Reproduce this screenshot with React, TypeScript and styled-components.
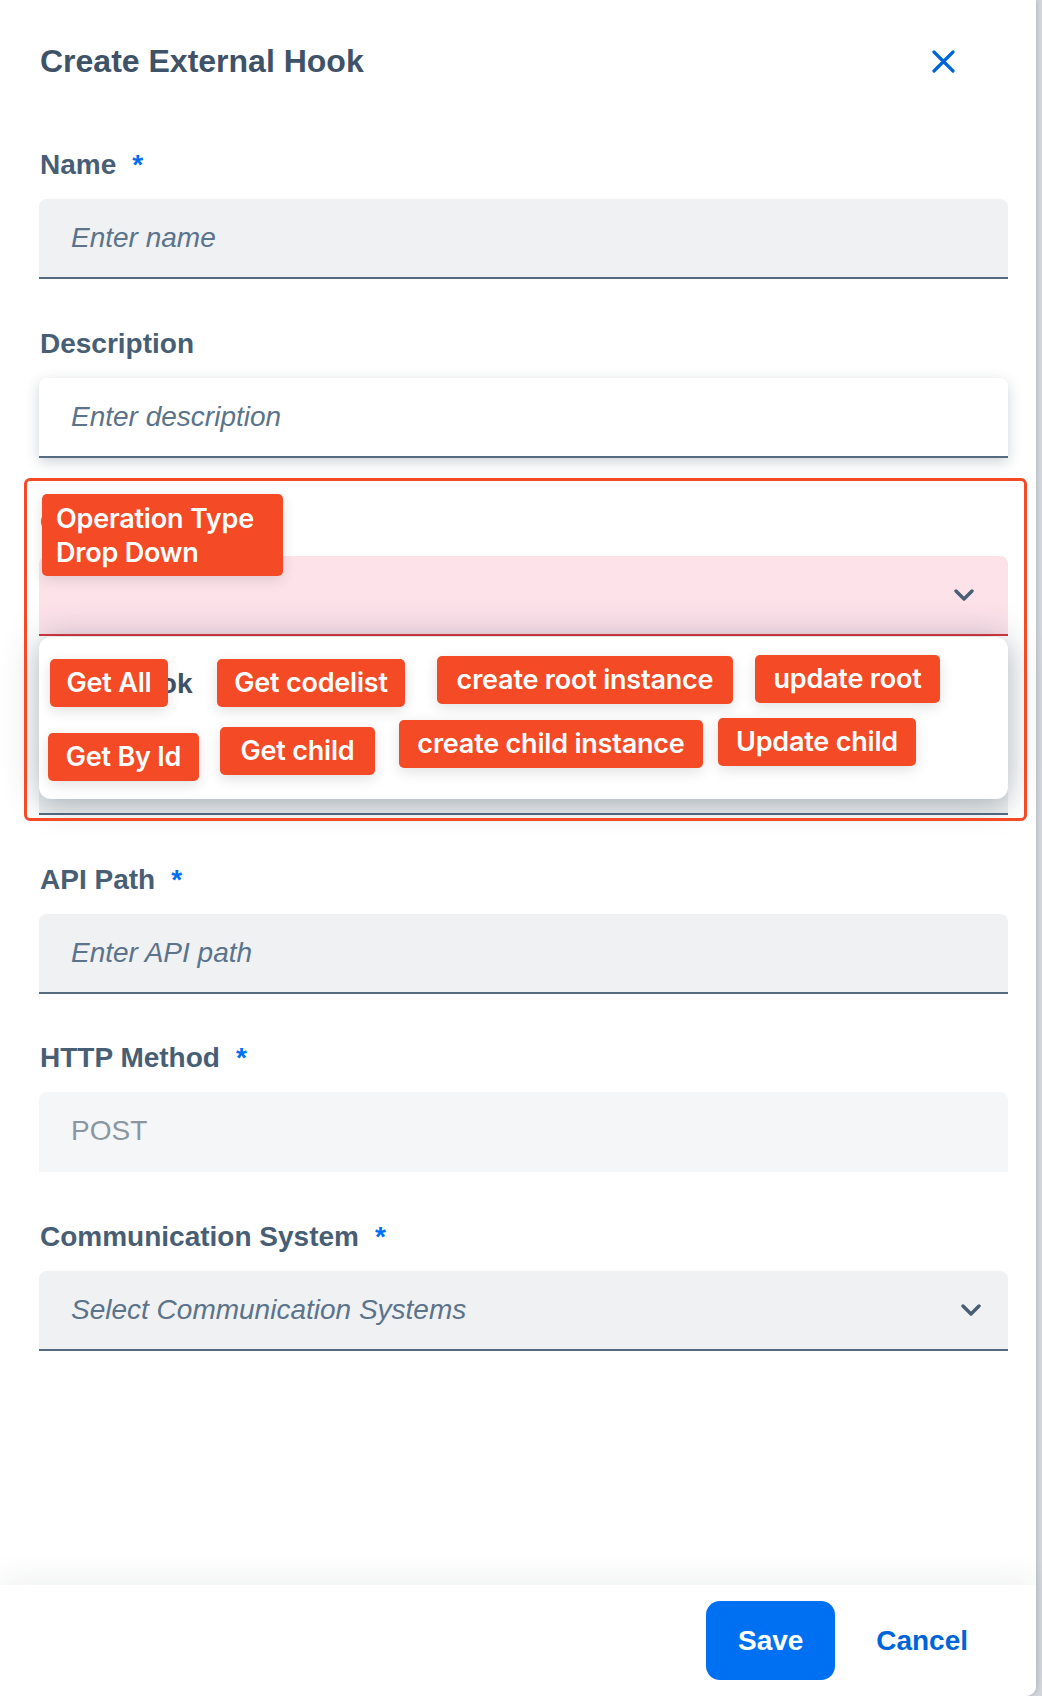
import React from "react";
import styled, { createGlobalStyle, css } from "styled-components";

const GlobalStyle = createGlobalStyle`
  html, body {
    margin: 0;
    padding: 0;
    background: #d3d7dc;
  }
  body {
    font-family: "Liberation Sans", Arial, sans-serif;
  }
  #root {
    min-height: 1696px;
  }
`;

const Panel = styled.div`
  position: relative;
  width: 1036px;
  min-height: 1696px;
  background: #ffffff;
  display: flex;
  flex-direction: column;
  border-radius: 0 0 10px 0;
  box-shadow: 1px 0 4px rgba(34, 54, 73, 0.18);
`;

const Header = styled.header`
  display: flex;
  align-items: center;
  justify-content: space-between;
  padding: 42px 81px 0 40px;
`;

const Title = styled.h1`
  margin: 0;
  font-size: 32px;
  line-height: 38px;
  font-weight: 700;
  color: #3e5268;
`;

const CloseButton = styled.button`
  width: 23px;
  height: 23px;
  padding: 0;
  border: none;
  background: none;
  display: flex;
  align-items: center;
  justify-content: center;
  cursor: pointer;
`;

const Form = styled.form`
  flex: 1;
  display: flex;
  flex-direction: column;
  gap: 47.7px;
  margin-top: 68px;
  padding: 0 28px 0 39px;
`;

const Field = styled.div`
  position: relative;
  display: flex;
  flex-direction: column;
  gap: 17px;
`;

const Label = styled.label`
  font-size: 28px;
  line-height: 34px;
  font-weight: 700;
  color: #475e75;
  padding-left: 1px;
`;

const Required = styled.span`
  color: #0070f2;
  margin-left: 16px;
`;

type BoxVariant = "default" | "focused" | "readonly" | "error";

const boxVariants: Record<BoxVariant, ReturnType<typeof css>> = {
  default: css`
    background: #eff1f2;
    border-bottom: 2px solid #556b82;
  `,
  focused: css`
    background: #ffffff;
    border-bottom: 2px solid #556b82;
    box-shadow: 0 4px 14px rgba(34, 54, 73, 0.22);
  `,
  readonly: css`
    background: #f5f6f7;
    border-bottom: 2px solid #f5f6f7;
  `,
  error: css`
    background: #fde2ea;
    border-bottom: 2px solid #d9363e;
  `,
};

const TextInput = styled.input<{ $variant: BoxVariant }>`
  box-sizing: border-box;
  width: 100%;
  height: 80px;
  padding: 0 30px 0 32px;
  border: none;
  border-radius: 8px 8px 0 0;
  outline: none;
  font-family: "Liberation Sans", Arial, sans-serif;
  font-size: 28px;
  color: ${(p) => (p.$variant === "readonly" ? "#8a96a1" : "#1d2d3e")};
  ${(p) => boxVariants[p.$variant]}

  &::placeholder {
    color: #5b738b;
    font-style: italic;
  }
`;

const SelectBox = styled.div<{ $variant: BoxVariant; $iconInset: number }>`
  box-sizing: border-box;
  display: flex;
  align-items: center;
  justify-content: space-between;
  height: 80px;
  padding: 0 ${(p) => p.$iconInset}px 0 32px;
  border-radius: 8px 8px 0 0;
  font-size: 28px;
  ${(p) => boxVariants[p.$variant]}
`;

const Placeholder = styled.span`
  color: #5b738b;
  font-style: italic;
`;

const Popover = styled.div`
  position: absolute;
  top: calc(100% + 1px);
  left: 0;
  right: 0;
  height: 162px;
  box-sizing: border-box;
  padding: 30px 28px;
  background: #ffffff;
  border-radius: 12px;
  box-shadow: 0 0 36px rgba(34, 54, 73, 0.28), 0 10px 20px rgba(34, 54, 73, 0.12);
  z-index: 2;
`;

const PopoverOption = styled.div`
  font-size: 28px;
  line-height: 34px;
  font-weight: 700;
  color: #3f5166;
`;

const Footer = styled.footer`
  height: 111px;
  display: flex;
  align-items: center;
  justify-content: flex-end;
  gap: 41px;
  padding-right: 68px;
  background: #ffffff;
  border-radius: 0 0 10px 0;
  box-shadow: 0 -10px 28px rgba(34, 54, 73, 0.06);
`;

const SaveButton = styled.button`
  width: 129px;
  height: 79px;
  border: none;
  border-radius: 14px;
  background: #0070f2;
  color: #ffffff;
  font-family: "Liberation Sans", Arial, sans-serif;
  font-size: 28px;
  font-weight: 700;
  cursor: pointer;
`;

const CancelButton = styled.button`
  border: none;
  background: none;
  padding: 0;
  color: #0064d9;
  font-family: "Liberation Sans", Arial, sans-serif;
  font-size: 28px;
  font-weight: 700;
  cursor: pointer;
`;

/* Annotation overlay */
const Highlight = styled.div`
  position: absolute;
  left: 24px;
  top: 478px;
  width: 1003px;
  height: 343px;
  box-sizing: border-box;
  border: 3px solid #f44a25;
  border-radius: 6px;
  z-index: 3;
  pointer-events: none;
`;

const Tag = styled.div<{ $x: number; $y: number; $w: number; $multi?: boolean }>`
  position: absolute;
  left: ${(p) => p.$x}px;
  top: ${(p) => p.$y}px;
  width: ${(p) => p.$w}px;
  box-sizing: border-box;
  padding: ${(p) => (p.$multi ? "8px 14px 6px" : "7px 0")};
  text-align: ${(p) => (p.$multi ? "left" : "center")};
  background: #f44a25;
  color: #ffffff;
  font-family: Inter, "Liberation Sans", sans-serif;
  font-size: 27px;
  font-weight: 600;
  letter-spacing: -0.2px;
  line-height: 34px;
  border-radius: 5px;
  white-space: nowrap;
  box-shadow: 0 4px 14px rgba(0, 0, 0, 0.12);
  z-index: 4;
`;

const CloseIcon = () => (
  <svg width="23" height="23" viewBox="0 0 23 23" fill="none">
    <path d="M2 2 L21 21 M21 2 L2 21" stroke="#0064d9" strokeWidth="3.2" strokeLinecap="round" />
  </svg>
);

const Chevron = () => (
  <svg width="20" height="12" viewBox="0 0 20 12" fill="none">
    <path d="M2 2 L10 10 L18 2" stroke="#475e75" strokeWidth="3.4" strokeLinecap="round" strokeLinejoin="round" />
  </svg>
);

const tags = [
  { text: "Get All", x: 50, y: 659, w: 118 },
  { text: "Get codelist", x: 217, y: 659, w: 188 },
  { text: "create root instance", x: 437, y: 656, w: 296 },
  { text: "update root", x: 755, y: 655, w: 185 },
  { text: "Get By Id", x: 48, y: 733, w: 151 },
  { text: "Get child", x: 220, y: 727, w: 155 },
  { text: "create child instance", x: 399, y: 720, w: 304 },
  { text: "Update child", x: 718, y: 718, w: 198 },
];

export default function App() {
  return (
    <>
      <GlobalStyle />
      <Panel>
        <Header>
          <Title>Create External Hook</Title>
          <CloseButton type="button" aria-label="Close">
            <CloseIcon />
          </CloseButton>
        </Header>

        <Form onSubmit={(e) => e.preventDefault()}>
          <Field>
            <Label>
              Name<Required>*</Required>
            </Label>
            <TextInput $variant="default" placeholder="Enter name" />
          </Field>

          <Field>
            <Label>Description</Label>
            <TextInput $variant="focused" placeholder="Enter description" />
          </Field>

          <Field>
            <Label>
              Operation Type<Required>*</Required>
            </Label>
            <SelectBox $variant="error" $iconInset={34}>
              <span />
              <Chevron />
            </SelectBox>
            <Popover>
              <PopoverOption>Webhook</PopoverOption>
            </Popover>
          </Field>

          <Field>
            <Label>
              Hook Type<Required>*</Required>
            </Label>
            <SelectBox $variant="default" $iconInset={27}>
              <Placeholder>Select hook type</Placeholder>
              <Chevron />
            </SelectBox>
          </Field>

          <Field>
            <Label>
              API Path<Required>*</Required>
            </Label>
            <TextInput $variant="default" placeholder="Enter API path" />
          </Field>

          <Field>
            <Label>
              HTTP Method<Required>*</Required>
            </Label>
            <TextInput $variant="readonly" value="POST" readOnly />
          </Field>

          <Field>
            <Label>
              Communication System<Required>*</Required>
            </Label>
            <SelectBox $variant="default" $iconInset={27}>
              <Placeholder>Select Communication Systems</Placeholder>
              <Chevron />
            </SelectBox>
          </Field>
        </Form>

        <Footer>
          <SaveButton type="button">Save</SaveButton>
          <CancelButton type="button">Cancel</CancelButton>
        </Footer>

        <Highlight />
        <Tag $x={42} $y={494} $w={241} $multi>
          Operation Type
          <br />
          Drop Down
        </Tag>
        {tags.map((t) => (
          <Tag key={t.text} $x={t.x} $y={t.y} $w={t.w}>
            {t.text}
          </Tag>
        ))}
      </Panel>
    </>
  );
}
